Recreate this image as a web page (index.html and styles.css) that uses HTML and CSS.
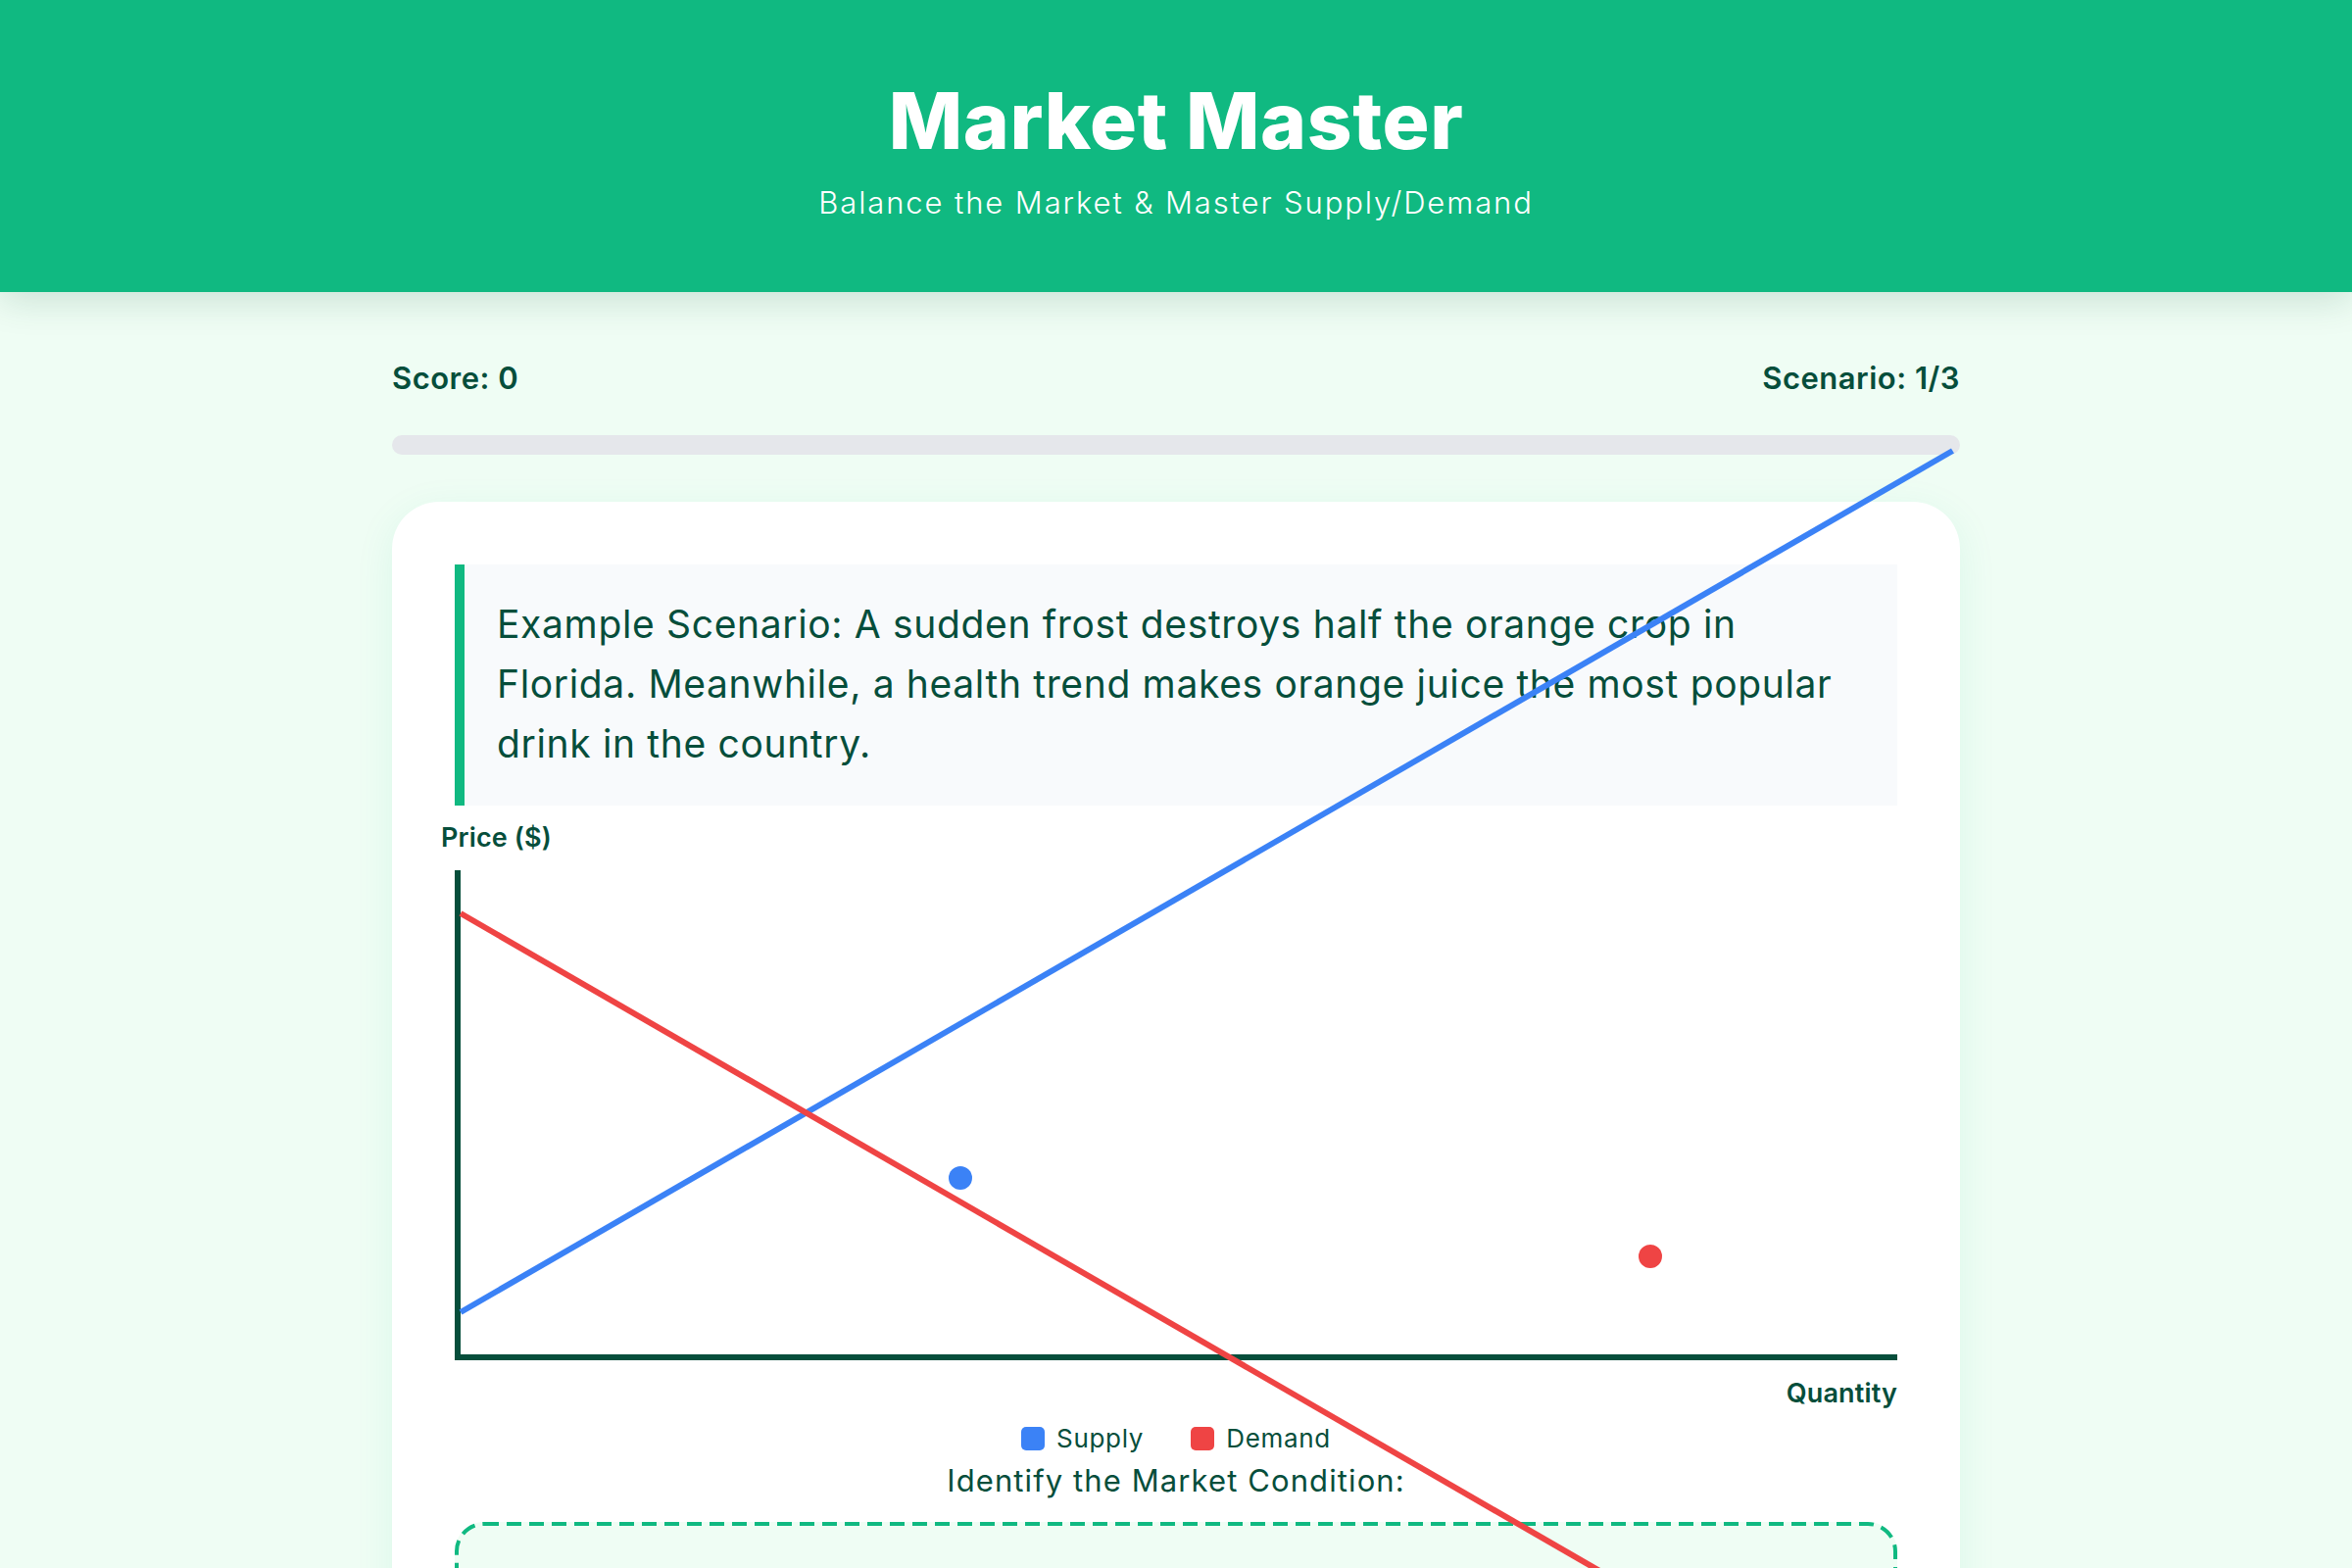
FILE: index.html
```html
<!DOCTYPE html>
<html lang="en">
<head>
<meta charset="utf-8">
<title>Market Master</title>
<link rel="stylesheet" href="styles.css">
</head>
<body>
<header class="hero">
  <h1 class="hero-title">Market Master</h1>
  <p class="hero-sub">Balance the Market &amp; Master Supply/Demand</p>
</header>
<main class="container">
  <div class="stats">
    <span class="stat">Score: 0</span>
    <span class="stat">Scenario: 1/3</span>
  </div>
  <div class="progress"><div class="progress-fill"></div></div>
  <section class="card">
    <div class="scenario">
      <p class="scenario-text">Example Scenario: A sudden frost destroys half the orange crop in Florida. Meanwhile, a health trend makes orange juice the most popular drink in the country.</p>
    </div>
    <div class="chart-block">
      <div class="axis-label y-label">Price ($)</div>
      <div class="chart">
        <div class="curve curve-supply"></div>
        <div class="curve curve-demand"></div>
        <div class="dot dot-supply"></div>
        <div class="dot dot-demand"></div>
      </div>
      <div class="axis-label x-label">Quantity</div>
    </div>
    <div class="legend">
      <span class="legend-item"><span class="swatch swatch-supply"></span>Supply</span>
      <span class="legend-item"><span class="swatch swatch-demand"></span>Demand</span>
    </div>
    <h2 class="prompt">Identify the Market Condition:</h2>
    <div class="dropzone">
      <svg class="dash-frame" aria-hidden="true"><rect class="dash-rect"></rect></svg>
    </div>
  </section>
</main>
</body>
</html>
```
FILE: styles.css
```css
* { box-sizing: border-box; }

body {
  margin: 0;
  background: #effdf4;
  font-family: "Inter", "Noto Sans", "DejaVu Sans", sans-serif;
  color: #064e3b;
}

.hero {
  position: relative;
  z-index: 2;
  background: #10b981;
  color: #ffffff;
  text-align: center;
  padding: 67px 20px 0;
  height: 298px;
  box-shadow: 0 8px 36px rgba(6, 78, 59, 0.16);
}

.hero-title {
  margin: 0;
  font-size: 80px;
  line-height: 112px;
  font-weight: 800;
  letter-spacing: 0.6px;
}

.hero-sub {
  margin: 6px 0 0;
  font-size: 31px;
  line-height: 44px;
  font-weight: 300;
  letter-spacing: 1.9px;
}

.container {
  width: 1600px;
  margin: 0 auto;
  padding-top: 66px;
}

.stats {
  display: flex;
  justify-content: space-between;
  font-size: 31px;
  line-height: 44px;
  font-weight: 600;
  letter-spacing: 0.5px;
}

.progress {
  margin-top: 36px;
  height: 20px;
  border-radius: 10px;
  background: #e5e7eb;
  overflow: hidden;
}

.progress-fill {
  width: 0;
  height: 100%;
  background: #10b981;
}

.card {
  margin-top: 48px;
  background: #ffffff;
  border-radius: 48px;
  padding: 64px;
  box-shadow: 0 10px 40px rgba(16, 185, 129, 0.09);
}

.scenario {
  background: #f8fafc;
  border-left: 10px solid #10b981;
  padding: 30px 32px 33px 33px;
}

.scenario-text {
  margin: 0;
  font-size: 39px;
  line-height: 61px;
  font-weight: 400;
  letter-spacing: 0.65px;
}

.chart-block {
  margin-top: 15px;
}

.axis-label {
  font-size: 27px;
  line-height: 36px;
  font-weight: 600;
  letter-spacing: 0.15px;
}

.y-label {
  margin-left: -14px;
}

.chart {
  position: relative;
  z-index: 1;
  margin-top: 15px;
  height: 500px;
  border-left: 6px solid #064e3b;
  border-bottom: 6px solid #064e3b;
}

.curve {
  position: absolute;
  left: 0;
  width: 1758px;
  height: 6px;
  transform-origin: 0 50%;
}

.curve-supply {
  top: 447.6px;
  background: #3b82f6;
  transform: rotate(-30deg);
}

.curve-demand {
  top: 41px;
  background: #ef4444;
  transform: rotate(30deg);
}

.dot {
  position: absolute;
  width: 24px;
  height: 24px;
  border-radius: 50%;
}

.dot-supply {
  left: 498px;
  top: 301.5px;
  background: #3b82f6;
}

.dot-demand {
  left: 1201.7px;
  top: 381.5px;
  background: #ef4444;
}

.x-label {
  margin-top: 16px;
  text-align: right;
}

.legend {
  margin-top: 10px;
  display: flex;
  justify-content: center;
  gap: 48px;
  font-size: 26px;
  line-height: 36px;
  letter-spacing: 0.7px;
}

.legend-item {
  display: inline-flex;
  align-items: center;
  gap: 12px;
}

.swatch {
  display: inline-block;
  width: 24px;
  height: 24px;
  border-radius: 5px;
}

.swatch-supply { background: #3b82f6; }
.swatch-demand { background: #ef4444; }

.prompt {
  margin: 3px 0 0;
  text-align: center;
  font-size: 31px;
  line-height: 44px;
  font-weight: 400;
  letter-spacing: 1.1px;
}

.dropzone {
  position: relative;
  margin-top: 20px;
  min-height: 240px;
  border-radius: 30px;
  background: #effdf4;
}

.dash-frame {
  position: absolute;
  inset: 0;
  width: 100%;
  height: 100%;
  overflow: visible;
}

.dash-rect {
  x: 2px;
  y: 2px;
  width: calc(100% - 4px);
  height: calc(100% - 4px);
  rx: 28px;
  ry: 28px;
  fill: none;
  stroke: #10b981;
  stroke-width: 4px;
  stroke-dasharray: 15 8;
}
```
